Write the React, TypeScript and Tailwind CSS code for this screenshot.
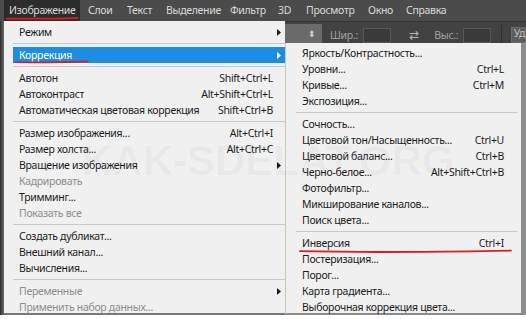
import React from "react";

type Row =
  | { sep: true }
  | { label: string; shortcut?: string; arrow?: boolean; disabled?: boolean; active?: boolean };

const SEP: Row = { sep: true };

const imageMenu: Row[] = [
  { label: "Режим", arrow: true },
  SEP,
  { label: "Коррекция", arrow: true, active: true },
  SEP,
  { label: "Автотон", shortcut: "Shift+Ctrl+L" },
  { label: "Автоконтраст", shortcut: "Alt+Shift+Ctrl+L" },
  { label: "Автоматическая цветовая коррекция", shortcut: "Shift+Ctrl+B" },
  SEP,
  { label: "Размер изображения...", shortcut: "Alt+Ctrl+I" },
  { label: "Размер холста...", shortcut: "Alt+Ctrl+C" },
  { label: "Вращение изображения", arrow: true },
  { label: "Кадрировать", disabled: true },
  { label: "Тримминг..." },
  { label: "Показать все", disabled: true },
  SEP,
  { label: "Создать дубликат..." },
  { label: "Внешний канал..." },
  { label: "Вычисления..." },
  SEP,
  { label: "Переменные", arrow: true, disabled: true },
  { label: "Применить набор данных...", disabled: true },
];

const adjustMenu: Row[] = [
  { label: "Яркость/Контрастность..." },
  { label: "Уровни...", shortcut: "Ctrl+L" },
  { label: "Кривые...", shortcut: "Ctrl+M" },
  { label: "Экспозиция..." },
  SEP,
  { label: "Сочность..." },
  { label: "Цветовой тон/Насыщенность...", shortcut: "Ctrl+U" },
  { label: "Цветовой баланс...", shortcut: "Ctrl+B" },
  { label: "Черно-белое...", shortcut: "Alt+Shift+Ctrl+B" },
  { label: "Фотофильтр..." },
  { label: "Микширование каналов..." },
  { label: "Поиск цвета..." },
  SEP,
  { label: "Инверсия", shortcut: "Ctrl+I" },
  { label: "Постеризация..." },
  { label: "Порог..." },
  { label: "Карта градиента..." },
  { label: "Выборочная коррекция цвета..." },
];

// fixed widths so each title lands where Photoshop put it
const topMenu = [
  { label: "Слои", w: "w-[39px]" },
  { label: "Текст", w: "w-[39px]" },
  { label: "Выделение", w: "w-[64px]" },
  { label: "Фильтр", w: "w-[48px]" },
  { label: "3D", w: "w-[28px]" },
  { label: "Просмотр", w: "w-[62px]" },
  { label: "Окно", w: "w-[38px]" },
  { label: "Справка", w: "w-[60px]" },
];

function Arrow({ white }: { white?: boolean }) {
  return (
    <svg width="4" height="7" viewBox="0 0 4 7">
      <path d="M0 0 L4 3.5 L0 7 Z" fill={white ? "#ffffff" : "#1a1a1a"} />
    </svg>
  );
}

function MenuRows({ rows, slot }: { rows: Row[]; slot: string }) {
  return (
    <>
      {rows.map((r, i) =>
        "sep" in r ? (
          <div key={i} className="h-[7px] flex items-center">
            <div className="h-px w-full bg-[#c9c9c9]" />
          </div>
        ) : (
          <div
            key={i}
            className={`h-[16px] flex items-center pl-[6px] ${
              r.active ? "bg-[#1c8de6] text-white" : r.disabled ? "text-[#8c8c8c]" : "text-[#1b1b1b]"
            }`}
          >
            <span className="flex-1 whitespace-nowrap">{r.label}</span>
            {r.shortcut && <span className="whitespace-nowrap">{r.shortcut}</span>}
            <span className={`${slot} flex justify-center`}>{r.arrow && <Arrow white={r.active} />}</span>
          </div>
        )
      )}
    </>
  );
}

function MenuBar() {
  return (
    <div className="h-[21px] flex items-center bg-[#4b4b4b] pl-[4px] text-[10.5px] tracking-[-0.3px] text-[#dadada]">
      <div className="h-full w-[76px] flex items-center bg-[#2c2c2c] pl-[5px] mr-[2px] whitespace-nowrap">Изображение</div>
      {topMenu.map((m) => (
        <div key={m.label} className={`h-full ${m.w} flex items-center pl-[6px] whitespace-nowrap`}>
          {m.label}
        </div>
      ))}
    </div>
  );
}

function OptionsBar() {
  return (
    <div className="h-[22px] flex items-end bg-[#424242] border-t border-[#333] text-[10.5px] text-[#a3a3a3]">
      <div className="w-[40px] h-[19px] bg-[#6a6a6a] flex items-center justify-end pr-[6px] text-[#d0d0d0] text-[9px]">
        ⬍
      </div>
      <span className="ml-[8px] mb-[3px]">Шир.:</span>
      <div className="ml-[5px] w-[30px] h-[15px] bg-[#3a3a3a] border border-[#585858]" />
      <span className="ml-[18px] mb-[2px] text-[#b5b5b5] text-[12px]">⇄</span>
      <span className="ml-[16px] mb-[3px]">Выс.:</span>
      <div className="ml-[5px] w-[30px] h-[15px] bg-[#3a3a3a] border border-[#585858]" />
      <div className="ml-[10px] w-px h-[18px] bg-[#2f2f2f]" />
      <div className="ml-[9px] flex-1 h-[16px] bg-[#5c5c5c] border border-[#6c6c6c] pl-[2px] text-[#bdbdbd]">Уд</div>
    </div>
  );
}

export default function App() {
  return (
    <div className="relative w-[526px] h-[319px] bg-white overflow-hidden font-['Noto_Sans',sans-serif] text-[10.5px] tracking-[-0.3px] leading-none">
      <div className="h-[315px] flex flex-col">
        <MenuBar />
        <div className="flex flex-1 min-h-0">
          <div className="w-[4px] bg-gradient-to-r from-[#2e2e2e] to-[#6a6a6a]" />
          <div className="w-[281px] bg-[#f0f0f0] pt-[3px] pl-[9px] border-b-2 border-[#777]">
            <MenuRows rows={imageMenu} slot="w-[12px]" />
          </div>
          <div className="flex-1 flex flex-col min-w-0">
            <OptionsBar />
            <div className="flex flex-1 min-h-0">
              <div className="w-[236px] bg-[#f0f0f0] border-l border-[#cfc6b8] pt-[2px] pl-[10px] pr-[3px] border-b-2 border-b-[#8a8a8a]">
                <MenuRows rows={adjustMenu} slot="w-[14px]" />
              </div>
              <div className="flex-1 bg-[#8d8d8d]" />
            </div>
          </div>
        </div>
      </div>

      {/* watermark */}
      <div className="absolute left-[82px] top-[140px] pointer-events-none font-['Liberation_Sans',sans-serif] font-bold text-[42px] tracking-normal leading-none text-black/[0.035] whitespace-nowrap">
        KAK-SDELAT.ORG
      </div>

      {/* red marker annotations */}
      <svg className="absolute inset-0 pointer-events-none" width="526" height="319">
        <path d="M7 18.6 C30 18.8 60 18.6 78 17.8" stroke="#e11b1b" strokeWidth="1.8" fill="none" strokeLinecap="round" />
        <path d="M15 62.2 C40 62.6 70 62 88 61.4" stroke="#e11b1b" strokeWidth="1.6" fill="none" strokeLinecap="round" />
        <path d="M300 251.2 C360 252.6 420 252 470 251.4 C490 251 502 250.8 511 250.6" stroke="#e11b1b" strokeWidth="1.8" fill="none" strokeLinecap="round" />
      </svg>
    </div>
  );
}
